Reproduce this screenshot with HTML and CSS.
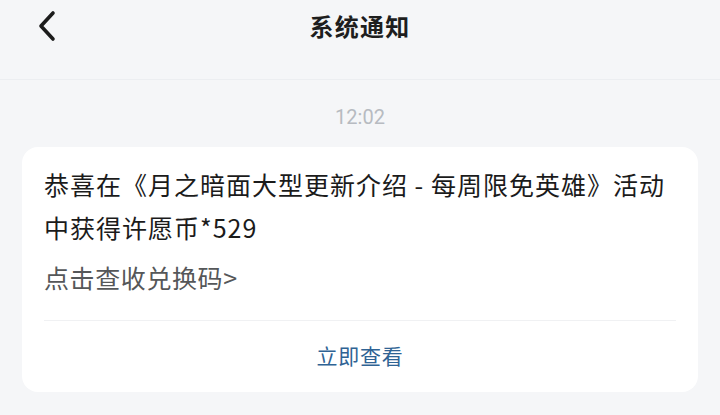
FILE: index.html
```html
<!DOCTYPE html>
<html lang="zh-CN">
<head>
<meta charset="utf-8">
<link rel="stylesheet" href="styles.css">
</head>
<body>
<header class="topbar">
  <div class="back">
    <svg width="20" height="32" viewBox="0 0 20 32"><path d="M16 3 L4 16 L16 29" fill="none" stroke="#1c1c1c" stroke-width="3.6" stroke-linecap="round" stroke-linejoin="round"/></svg>
  </div>
  <h1 class="title">系统通知</h1>
  <div></div>
</header>
<div class="time">12:02</div>
<section class="card">
  <div class="body">
    <p class="msg">恭喜在《月之暗面大型更新介绍 - 每周限免英雄》活动中获得许愿币*529</p>
    <p class="hint">点击查收兑换码&gt;</p>
  </div>
  <div class="action">立即查看</div>
</section>
</body>
</html>
```
FILE: styles.css
```css
html, body {
  margin: 0;
  padding: 0;
}
body {
  background: #f5f6f8;
  font-family: "Noto Sans CJK SC", "Noto Sans", sans-serif;
  color: #1b1b1b;
  width: 720px;
  height: 415px;
  overflow: hidden;
}
.topbar {
  display: grid;
  grid-template-columns: 1fr auto 1fr;
  align-items: center;
  box-sizing: border-box;
  height: 80px;
  padding-bottom: 28px;
  border-bottom: 1px solid #eceef1;
}
.back {
  padding-left: 37px;
  display: flex;
  align-items: center;
  height: 52px;
}
.title {
  margin: 0;
  font-size: 24px;
  font-weight: 700;
  letter-spacing: 1.2px;
  line-height: 52px;
  color: #1e1e1e;
}
.time {
  text-align: center;
  font-family: Roboto, "Noto Sans", sans-serif;
  font-size: 20px;
  color: #b7bbc1;
  line-height: 24px;
  margin-top: 25px;
}
.card {
  margin: 18px 22px 0;
  background: #ffffff;
  border-radius: 16px;
  height: 245px;
  box-sizing: border-box;
  display: flex;
  flex-direction: column;
}
.body {
  margin: 0 22px;
  padding: 16px 0 21px;
  border-bottom: 1px solid #f0f1f3;
}
.msg {
  margin: 0;
  font-size: 25px;
  line-height: 43px;
  letter-spacing: 1px;
  color: #1b1b1b;
}
.hint {
  margin: 7px 0 0;
  font-size: 25px;
  line-height: 43px;
  letter-spacing: 0.6px;
  color: #555759;
}
.action {
  flex: 1;
  display: flex;
  align-items: center;
  justify-content: center;
  font-size: 21px;
  color: #2f6394;
  letter-spacing: 0.8px;
  padding-bottom: 4px;
}
```
